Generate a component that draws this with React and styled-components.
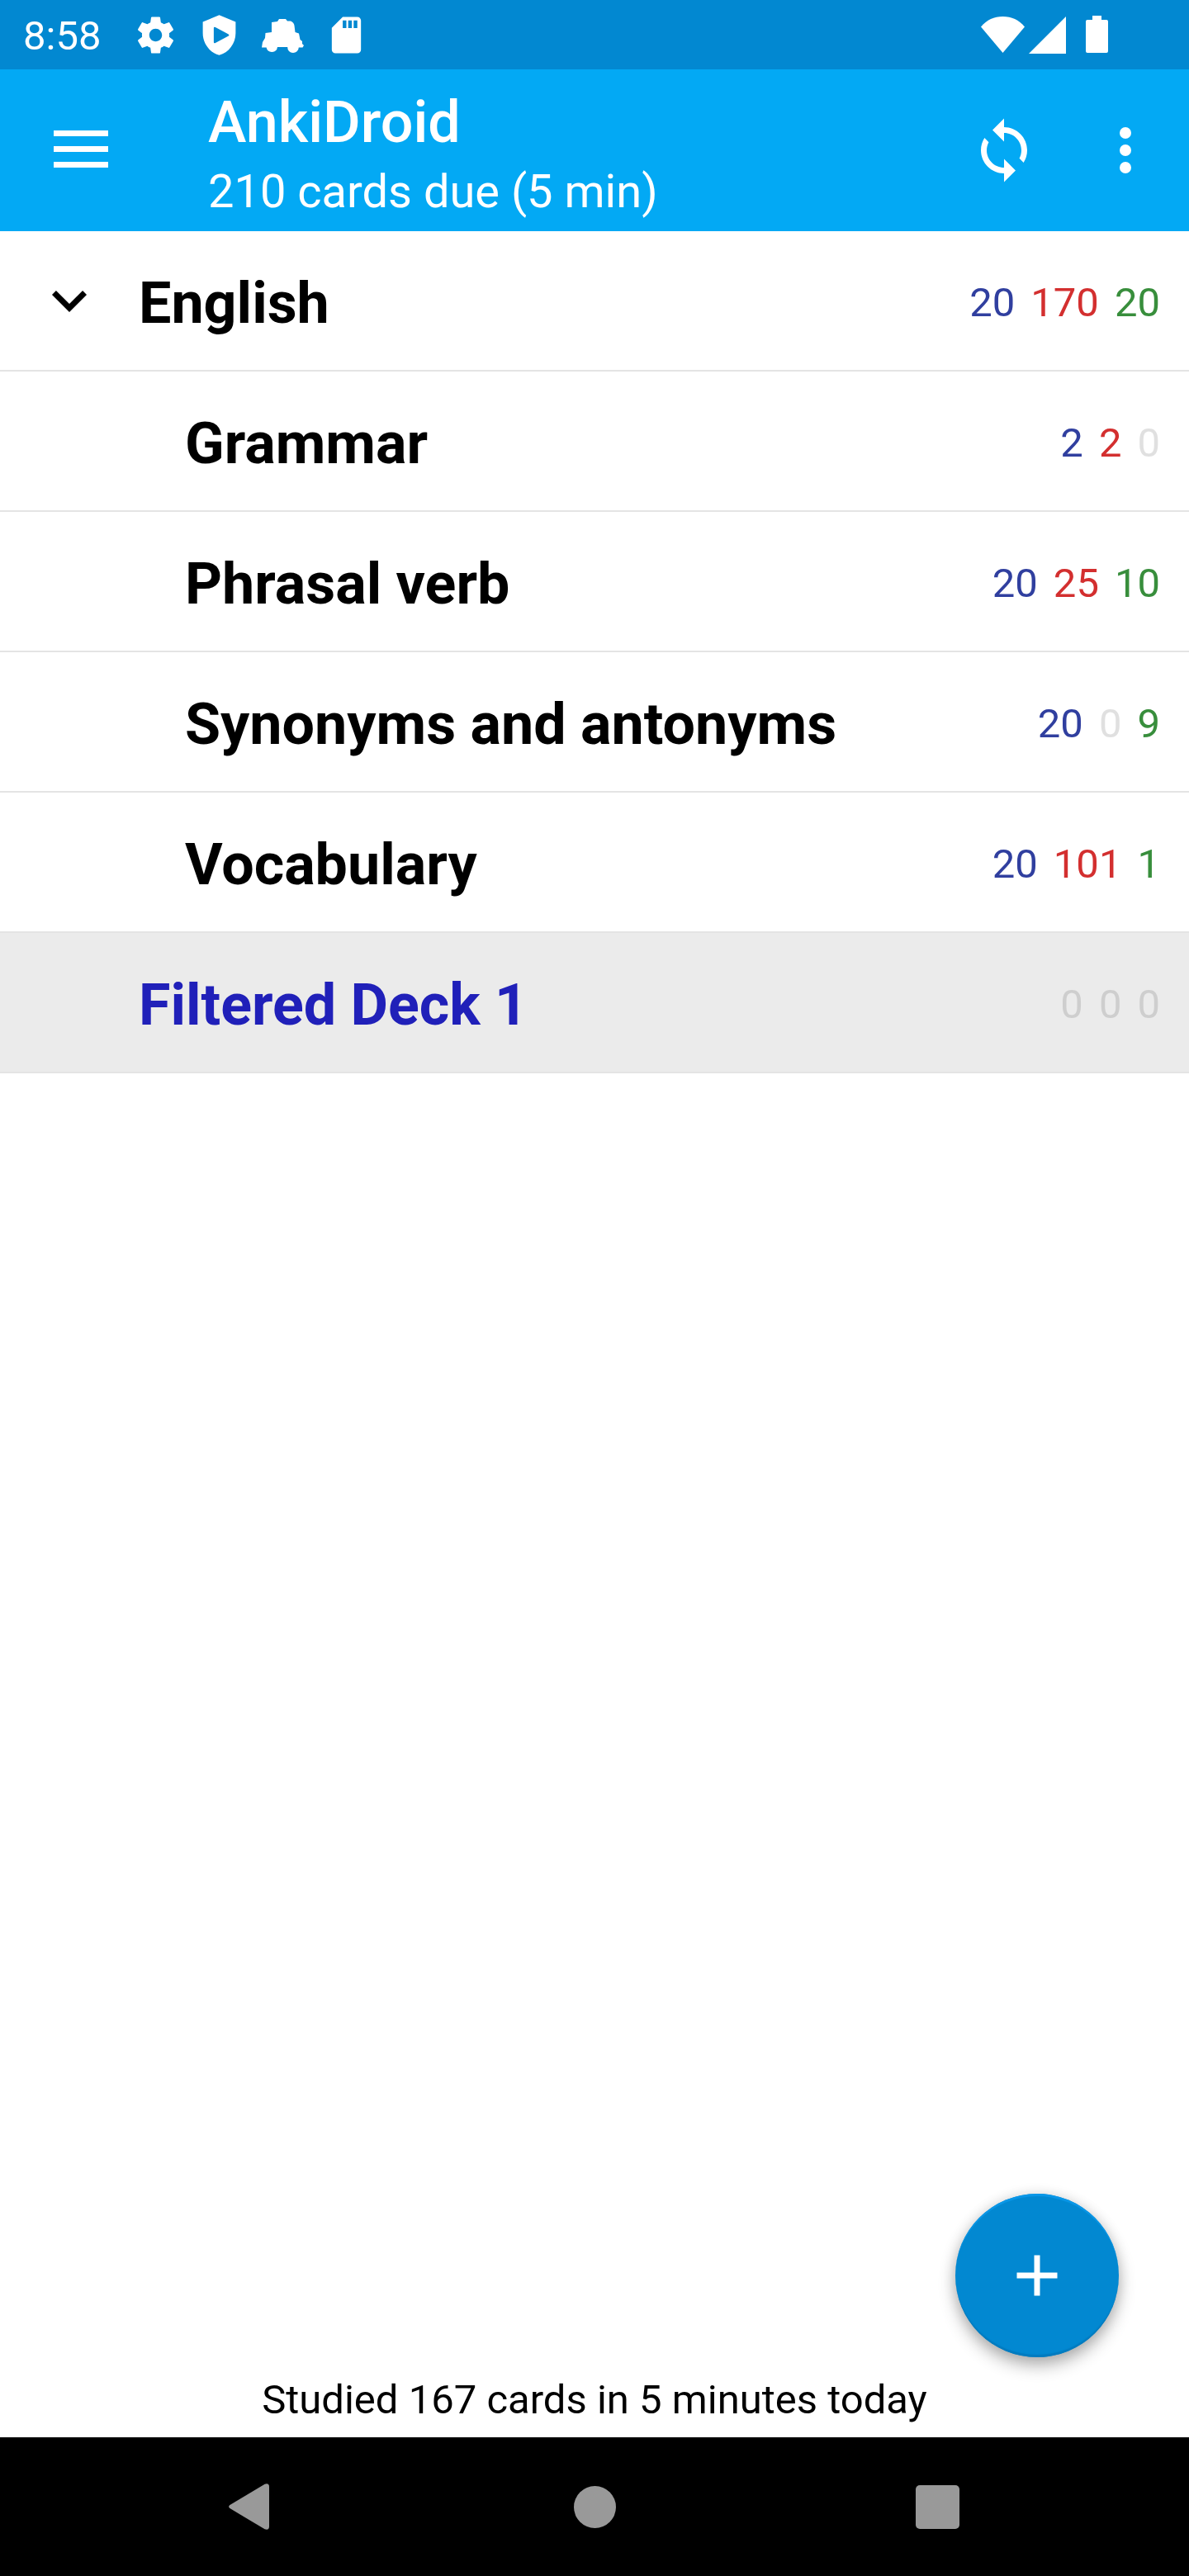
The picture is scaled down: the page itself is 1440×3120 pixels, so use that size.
import React from "react";
import styled, { createGlobalStyle } from "styled-components";

const GlobalStyle = createGlobalStyle`
  * { box-sizing: border-box; }
  body { margin: 0; background: #fff; font-family: Roboto, "Liberation Sans", sans-serif; }
  button { border: 0; padding: 0; margin: 0; background: none; color: inherit; font: inherit; cursor: pointer; }
  svg { display: block; }
`;

const Screen = styled.div`
  min-height: 100vh;
  display: flex;
  flex-direction: column;
  color: #000;
`;

const StatusBar = styled.div`
  height: 84px;
  padding: 0 98px 0 28px;
  display: flex;
  align-items: center;
  justify-content: space-between;
  background: #0288d1;
  color: #fff;
`;

const StatusGroup = styled.div`
  display: flex;
  align-items: center;
  gap: ${(p) => p.$gap}px;
`;

const Clock = styled.time`
  padding-top: 4px;
  margin-right: 16px;
  font-size: 49px;
  line-height: 60px;
`;

const Toolbar = styled.header`
  display: flex;
  align-items: center;
  padding: 0 14px 0 56px;
  background: #03a9f4;
  color: #fff;
`;

const IconButton = styled.button`
  width: ${(p) => p.$width}px;
  height: 84px;
  display: flex;
  align-items: center;
  justify-content: center;
`;

const Titles = styled.div`
  flex: 1;
  padding: 22px 0 6px 112px;
`;

const Title = styled.h1`
  margin: 0;
  font-size: 70px;
  line-height: 84px;
  font-weight: 500;
`;

const Subtitle = styled.p`
  margin: 0;
  font-size: 56px;
  line-height: 84px;
`;

const DeckList = styled.ul`
  flex: 1;
  margin: 0;
  padding: 0;
  list-style: none;
`;

const DeckRow = styled.li`
  height: 170px;
  display: flex;
  align-items: center;
  padding: 0 35px 0 42px;
  border-bottom: 2px solid #e4e4e4;
  background: ${(p) => (p.$selected ? "#ebebeb" : "#fff")};
`;

const Expander = styled.div`
  width: 126px;
`;

const DeckName = styled.button`
  flex: 1;
  padding: 5px 0 0 ${(p) => (p.$nested ? 56 : 0)}px;
  text-align: left;
  font-size: 70px;
  line-height: 84px;
  font-weight: 700;
  color: ${(p) => (p.$filtered ? "#2020b9" : "#000")};
`;

const Counts = styled.div`
  display: flex;
  gap: 19px;
  padding-top: 5px;
  font-size: 49px;
  line-height: 60px;
`;

const Count = styled.span`
  color: ${(p) => p.$color};
`;

const AddButton = styled.button`
  align-self: flex-end;
  width: 198px;
  height: 198px;
  margin: 0 85px 7px;
  display: flex;
  align-items: center;
  justify-content: center;
  border-radius: 50%;
  background: #0288d1;
  color: #fff;
  box-shadow: inset 0 4px 1px -1px #0a97e8, inset 0 -4px 1px -1px #027bbf,
    0 10px 20px rgba(0, 0, 0, 0.3), 0 0 16px rgba(0, 0, 0, 0.1);
`;

const Summary = styled.p`
  margin: 0;
  text-align: center;
  font-size: 49px;
  line-height: 90px;
`;

const NavBar = styled.nav`
  height: 168px;
  display: flex;
  align-items: center;
  justify-content: center;
  gap: 135px;
  background: #000;
  color: #999;
`;

const NavButton = styled.button`
  width: 280px;
  height: 168px;
  display: flex;
  align-items: center;
  justify-content: center;
`;

const Glyph = ({ size, children, box = "0 0 24 24", height }) => (
  <svg width={size} height={height || size} viewBox={box} fill="currentColor" aria-hidden="true">
    {children}
  </svg>
);

const GearIcon = () => (
  <Glyph size={53}>
    <path d="M19.430 12.980c.04-.32.07-.64.07-.98s-.03-.66-.07-.98l2.110-1.650c.19-.15.24-.42.12-.64l-2-3.460c-.12-.22-.39-.3-.61-.22l-2.490 1c-.52-.4-1.080-.73-1.690-.98l-.38-2.650A.488.488 0 0 0 14 2h-4c-.25 0-.46.18-.49.42l-.38 2.650c-.61.25-1.170.59-1.690.98l-2.490-1c-.23-.09-.49 0-.61.22l-2 3.460c-.13.22-.07.49.12.64l2.110 1.650c-.04.32-.07.65-.07.98s.03.66.07.98l-2.110 1.650c-.19.15-.24.42-.12.64l2 3.460c.12.22.39.3.61.22l2.490-1c.52.4 1.080.73 1.690.98l.38 2.650c.03.24.24.42.49.42h4c.25 0 .46-.18.49-.42l.38-2.650c.61-.25 1.170-.59 1.690-.98l2.490 1c.23.09.49 0 .61-.22l2-3.460c.12-.22.07-.49-.12-.64l-2.110-1.650zM12 15.500c-1.930 0-3.500-1.570-3.500-3.500s1.570-3.500 3.500-3.500 3.500 1.570 3.500 3.500-1.570 3.500-3.500 3.500z" />
  </Glyph>
);

const ShieldIcon = () => (
  <Glyph size={53}>
    <path fillRule="evenodd" d="M12 1L3 4.800V11c0 5.550 3.840 10.740 9 12 5.160-1.260 9-6.450 9-12V4.800zM9 8.200q0-.9.9-.5l7 3.700q1 .6 0 1.200l-7 3.700q-.9.400-.9-.5z" />
  </Glyph>
);

const CarIcon = () => (
  <Glyph size={53} box="0 0 53 53">
    <path d="M13 11L20 10 22 7H30L32 9.500H36Q40 11 40.500 15L41.500 23 46 24.500 47.500 32 50 34V37L52 39 50.500 41.500H45.800A6.800 6.800 0 0 1 32.200 41H20A6.800 6.800 0 0 1 6.600 41.500H1L2 35 5 30 5.500 24 13 23z" />
  </Glyph>
);

const SdCardIcon = () => (
  <Glyph size={53}>
    <path fillRule="evenodd" d="M18 2h-8L4 8v12c0 1.100.9 2 2 2h12c1.100 0 2-.9 2-2V4c0-1.100-.9-2-2-2zM10 4h2v4.200h-2zM13 4h2v4.200h-2zM16 4h2v4.200h-2z" />
  </Glyph>
);

const WifiIcon = () => (
  <Glyph size={53} height={45} box="0 0 53 45">
    <path d="M0 12.500C7 4 16 0 26.500 0S46 4 53 12.500L26.500 44z" />
  </Glyph>
);

const SignalIcon = () => (
  <Glyph size={45}>
    <path d="M0 24H24V0z" />
  </Glyph>
);

const BatteryIcon = () => (
  <Glyph size={27} height={46} box="0 0 27 46">
    <path d="M8 0h11v5h6q2 0 2 2v36q0 2-2 2H2q-2 0-2-2V7q0-2 2-2h6z" />
  </Glyph>
);

const MenuIcon = () => (
  <Glyph size={66} height={48} box="0 0 66 48">
    <path d="M0 0h66v7H0zM0 19h66v7H0zM0 38h66v7H0z" />
  </Glyph>
);

const SyncIcon = () => (
  <Glyph size={84}>
    <path d="M12 4V1L8 5l4 4V6c3.310 0 6 2.690 6 6 0 1.010-.25 1.970-.7 2.800l1.460 1.460A7.930 7.930 0 0 0 20 12c0-4.420-3.580-8-8-8zm0 14c-3.310 0-6-2.690-6-6 0-1.010.25-1.970.7-2.800L5.240 7.740A7.930 7.930 0 0 0 4 12c0 4.420 3.580 8 8 8v3l4-4-4-4z" />
  </Glyph>
);

const MoreIcon = () => (
  <Glyph size={84}>
    <circle cx="12" cy="6" r="2" />
    <circle cx="12" cy="12" r="2" />
    <circle cx="12" cy="18" r="2" />
  </Glyph>
);

const ChevronIcon = () => (
  <Glyph size={84}>
    <path d="M16.590 8.590L12 13.170 7.410 8.590 6 10l6 6 6-6z" />
  </Glyph>
);

const PlusIcon = () => (
  <Glyph size={84}>
    <path d="M19 13h-6v6h-2v-6H5v-2h6V5h2v6h6z" />
  </Glyph>
);

const decks = [
  { name: "English", counts: [20, 170, 20], expandable: true },
  { name: "Grammar", counts: [2, 2, 0], nested: true },
  { name: "Phrasal verb", counts: [20, 25, 10], nested: true },
  { name: "Synonyms and antonyms", counts: [20, 0, 9], nested: true },
  { name: "Vocabulary", counts: [20, 101, 1], nested: true },
  { name: "Filtered Deck 1", counts: [0, 0, 0], filtered: true },
];

const countColors = ["#303f9f", "#d32f2f", "#388e3c"];

function Deck({ name, counts, expandable, nested, filtered }) {
  const zeroColor = filtered ? "#cecece" : "#e0e0e0";
  return (
    <DeckRow $selected={filtered}>
      <Expander>
        {expandable && (
          <IconButton $width={84} aria-label="Collapse deck">
            <ChevronIcon />
          </IconButton>
        )}
      </Expander>
      <DeckName $nested={nested} $filtered={filtered}>{name}</DeckName>
      <Counts>
        {counts.map((n, i) => (
          <Count key={i} $color={n === 0 ? zeroColor : countColors[i]}>{n}</Count>
        ))}
      </Counts>
    </DeckRow>
  );
}

export default function App() {
  return (
    <Screen>
      <GlobalStyle />
      <StatusBar>
        <StatusGroup $gap={24}>
          <Clock>8:58</Clock>
          <GearIcon />
          <ShieldIcon />
          <CarIcon />
          <SdCardIcon />
        </StatusGroup>
        <StatusGroup $gap={24}>
          <StatusGroup $gap={5}>
            <WifiIcon />
            <SignalIcon />
          </StatusGroup>
          <BatteryIcon />
        </StatusGroup>
      </StatusBar>
      <Toolbar>
        <IconButton $width={84} aria-label="Open menu">
          <MenuIcon />
        </IconButton>
        <Titles>
          <Title>AnkiDroid</Title>
          <Subtitle>210 cards due (5 min)</Subtitle>
        </Titles>
        <IconButton $width={168} aria-label="Sync">
          <SyncIcon />
        </IconButton>
        <IconButton $width={126} aria-label="More options">
          <MoreIcon />
        </IconButton>
      </Toolbar>
      <DeckList>
        {decks.map((deck) => (
          <Deck key={deck.name} {...deck} />
        ))}
      </DeckList>
      <AddButton aria-label="Add">
        <PlusIcon />
      </AddButton>
      <Summary>Studied 167 cards in 5 minutes today</Summary>
      <NavBar>
        <NavButton aria-label="Back">
          <Glyph size={56}>
            <path d="M.6 11.100L18.700.3Q21 -.4 21 1.700V22.300Q21 24.400 18.700 23.700L.6 12.900Q-.5 12 .6 11.100z" />
          </Glyph>
        </NavButton>
        <NavButton aria-label="Home">
          <Glyph size={51}>
            <circle cx="12" cy="12" r="12" />
          </Glyph>
        </NavButton>
        <NavButton aria-label="Recent apps">
          <Glyph size={53} box="0 0 53 53">
            <rect width="53" height="53" rx="5" />
          </Glyph>
        </NavButton>
      </NavBar>
    </Screen>
  );
}
